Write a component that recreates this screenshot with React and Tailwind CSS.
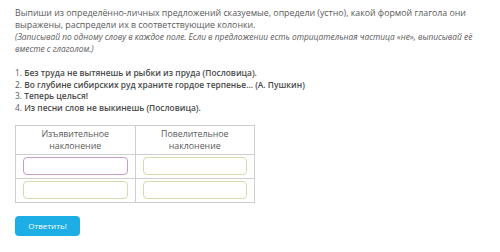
export default function App() {
  const cell = 'border border-[#cfcfcf] px-[7px] py-[2px]'
  return (
    <div className="w-[500px] h-[252px] bg-white text-[#5a5a5a] pl-[15px] pt-[8px]" style={{ fontFamily: '"Open Sans", sans-serif' }}>
      <div className="w-[474px] text-[8.8px] leading-[11.7px]">
        <p>
          Выпиши из определённо-личных предложений сказуемые, определи (устно), какой формой глагола они выражены, распредели их в соответствующие колонки.
        </p>
        <p className="italic text-[8.35px]">
          (Записывай по одному слову в каждое поле. Если в предложении есть отрицательная частица «не», выписывай её вместе с глаголом.)
        </p>
      </div>

      <ol className="mt-[12px] text-[8.4px] leading-[11.7px]">
        <li>1. <b className="font-semibold text-[#4a4a4a]">Без труда не вытянешь и рыбки из пруда (Пословица).</b></li>
        <li>2. <b className="font-semibold text-[#4a4a4a]">Во глубине сибирских руд храните гордое терпенье... (А. Пушкин)</b></li>
        <li>3. <b className="font-semibold text-[#4a4a4a]">Теперь целься!</b></li>
        <li>4. <b className="font-semibold text-[#4a4a4a]">Из песни слов не выкинешь (Пословица).</b></li>
      </ol>

      <table className="mt-[11px] border-collapse text-[8.8px] leading-[12px] w-[240px]">
        <thead>
          <tr className="h-[29px]">
            <th className="border border-[#cfcfcf] font-normal text-center w-[120px]">Изъявительное<br />наклонение</th>
            <th className="border border-[#cfcfcf] font-normal text-center w-[120px]">Повелительное<br />наклонение</th>
          </tr>
        </thead>
        <tbody>
          <tr className="h-[24px]">
            <td className={cell}><div className="h-[18px] rounded-[4px] border border-[#c79cc8]" /></td>
            <td className={cell}><div className="h-[18px] rounded-[4px] border border-[#d3dcae]" /></td>
          </tr>
          <tr className="h-[24px]">
            <td className={cell}><div className="h-[18px] rounded-[4px] border border-[#d3dcae]" /></td>
            <td className={cell}><div className="h-[18px] rounded-[4px] border border-[#d3dcae]" /></td>
          </tr>
        </tbody>
      </table>

      <button className="mt-[13px] w-[65px] h-[20px] rounded-[4px] bg-[#1daee6] text-white text-[8px]">
        Ответить!
      </button>
    </div>
  )
}
